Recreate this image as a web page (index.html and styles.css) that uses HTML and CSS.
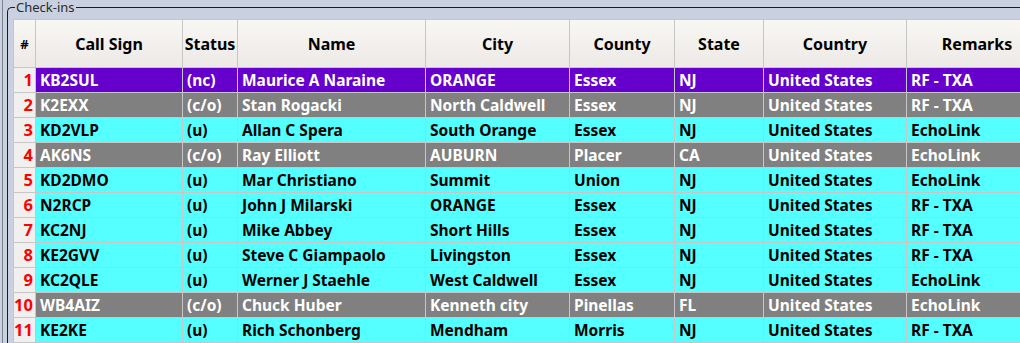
FILE: index.html
```html
<!DOCTYPE html>
<html>
<head>
<meta charset="utf-8">
<link rel="stylesheet" href="styles.css">
</head>
<body>
<div class="window">
  <fieldset class="group">
    <legend class="group-title">Check-ins</legend>
    <table class="grid">
      <colgroup>
        <col class="c-num"><col class="c-call"><col class="c-status"><col class="c-name"><col class="c-city"><col class="c-county"><col class="c-state"><col class="c-country"><col class="c-remarks">
      </colgroup>
      <thead>
        <tr>
          <th class="num-h">#</th><th>Call Sign</th><th>Status</th><th>Name</th><th>City</th><th>County</th><th>State</th><th>Country</th><th>Remarks</th>
        </tr>
      </thead>
      <tbody>
        <tr class="r-purple"><td class="num">1</td><td>KB2SUL</td><td>(nc)</td><td>Maurice A Naraine</td><td>ORANGE</td><td>Essex</td><td>NJ</td><td>United States</td><td>RF - TXA</td></tr>
        <tr class="r-gray"><td class="num">2</td><td>K2EXX</td><td>(c/o)</td><td>Stan Rogacki</td><td>North Caldwell</td><td>Essex</td><td>NJ</td><td>United States</td><td>RF - TXA</td></tr>
        <tr class="r-cyan"><td class="num">3</td><td>KD2VLP</td><td>(u)</td><td>Allan C Spera</td><td>South Orange</td><td>Essex</td><td>NJ</td><td>United States</td><td>EchoLink</td></tr>
        <tr class="r-gray"><td class="num">4</td><td>AK6NS</td><td>(c/o)</td><td>Ray Elliott</td><td>AUBURN</td><td>Placer</td><td>CA</td><td>United States</td><td>EchoLink</td></tr>
        <tr class="r-cyan"><td class="num">5</td><td>KD2DMO</td><td>(u)</td><td>Mar Christiano</td><td>Summit</td><td>Union</td><td>NJ</td><td>United States</td><td>EchoLink</td></tr>
        <tr class="r-cyan"><td class="num">6</td><td>N2RCP</td><td>(u)</td><td>John J Milarski</td><td>ORANGE</td><td>Essex</td><td>NJ</td><td>United States</td><td>RF - TXA</td></tr>
        <tr class="r-cyan"><td class="num">7</td><td>KC2NJ</td><td>(u)</td><td>Mike Abbey</td><td>Short Hills</td><td>Essex</td><td>NJ</td><td>United States</td><td>RF - TXA</td></tr>
        <tr class="r-cyan"><td class="num">8</td><td>KE2GVV</td><td>(u)</td><td>Steve C Giampaolo</td><td>Livingston</td><td>Essex</td><td>NJ</td><td>United States</td><td>RF - TXA</td></tr>
        <tr class="r-cyan"><td class="num">9</td><td>KC2QLE</td><td>(u)</td><td>Werner J Staehle</td><td>West Caldwell</td><td>Essex</td><td>NJ</td><td>United States</td><td>EchoLink</td></tr>
        <tr class="r-gray"><td class="num">10</td><td>WB4AIZ</td><td>(c/o)</td><td>Chuck Huber</td><td>Kenneth city</td><td>Pinellas</td><td>FL</td><td>United States</td><td>EchoLink</td></tr>
        <tr class="r-cyan"><td class="num">11</td><td>KE2KE</td><td>(u)</td><td>Rich Schonberg</td><td>Mendham</td><td>Morris</td><td>NJ</td><td>United States</td><td>RF - TXA</td></tr>
      </tbody>
    </table>
  </fieldset>
</div>
</body>
</html>
```

FILE: styles.css
```css
html, body {
  margin: 0;
  padding: 0;
  width: 1020px;
  height: 343px;
  overflow: hidden;
  background: #c9d1e1;
  font-family: "Noto Sans", "Open Sans", sans-serif;
}

.window {
  margin-left: 2px;
  border-left: 1px solid #7d828c;
  height: 343px;
  overflow: hidden;
}

.group {
  margin: 0 0 0 4px;
  padding: 5px 0 0 5px;
  border: 1px solid #1c1c1c;
  border-right: none;
  border-bottom: none;
  border-top-left-radius: 5px;
  min-width: 0;
  width: 1100px;
  height: 400px;
  box-sizing: border-box;
}

.group-title {
  margin-left: 2px;
  padding: 0 1px;
  font-size: 13px;
  line-height: 14px;
  font-weight: normal;
  color: #2a2a2a;
}

.grid {
  table-layout: fixed;
  border-collapse: separate;
  border-spacing: 0;
  width: 1034px;
  border-left: 1px solid #c6c6c6;
  border-top: 1px solid #c6c6c6;
  font-size: 15.5px;
  font-weight: bold;
}

.c-num { width: 22px; }
.c-call { width: 147px; }
.c-status { width: 55px; }
.c-name { width: 188px; }
.c-city { width: 144px; }
.c-county { width: 105px; }
.c-state { width: 89px; }
.c-country { width: 143px; }
.c-remarks { width: 141px; }

.grid th, .grid td {
  border-right: 1px solid #c6c6c6;
  border-bottom: 1px solid #c6c6c6;
  white-space: nowrap;
  overflow: hidden;
  box-sizing: border-box;
}

.grid th {
  height: 48px;
  padding: 0;
  text-align: center;
  color: #000;
  font-size: 16px;
  background: linear-gradient(#f9f7f4, #ece9e6);
}

.grid th.num-h {
  font-size: 13px;
}

.grid td {
  height: 25px;
  padding: 0 0 0 4px;
  line-height: 24px;
}

.grid td.num {
  text-align: right;
  padding: 0 2px 0 0;
  color: #ff0000;
  background: #f1f0ee;
  font-size: 16.5px;
}

.r-purple td { background: #6600cc; color: #ffffff; }
.r-gray td { background: #808080; color: #ffffff; }
.r-cyan td { background: #55ffff; color: #000000; }
```
